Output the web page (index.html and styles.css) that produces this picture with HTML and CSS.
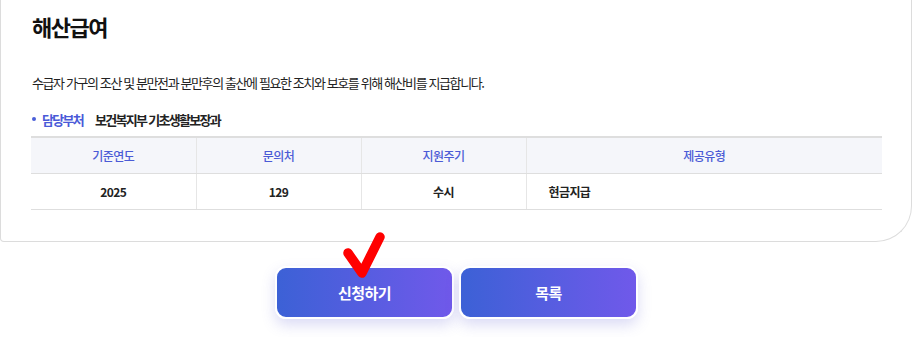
FILE: index.html
```html
<!DOCTYPE html>
<html lang="ko">
<head>
<meta charset="utf-8">
<link rel="stylesheet" href="styles.css">
</head>
<body>
<div class="page">
  <section class="card">
    <h2 class="title">해산급여</h2>
    <p class="desc">수급자 가구의 조산 및 분만전과 분만후의 출산에 필요한 조치와 보호를 위해 해산비를 지급합니다.</p>
    <div class="dept">
      <span class="dot"></span>
      <span class="dept-label">담당부처</span>
      <span class="dept-value">보건복지부 기초생활보장과</span>
    </div>
    <table class="info">
      <colgroup>
        <col class="c1"><col class="c2"><col class="c3"><col class="c4">
      </colgroup>
      <thead>
        <tr><th>기준연도</th><th>문의처</th><th>지원주기</th><th>제공유형</th></tr>
      </thead>
      <tbody>
        <tr><td>2025</td><td>129</td><td>수시</td><td class="left">현금지급</td></tr>
      </tbody>
    </table>
  </section>
  <div class="actions">
    <button class="btn">신청하기</button>
    <button class="btn">목록</button>
  </div>
  <svg class="check" width="50" height="50" viewBox="0 0 50 50">
    <path d="M7 22 L21 42 L39 6" fill="none" stroke="#ff0000" stroke-width="9.5" stroke-linecap="round" stroke-linejoin="round"/>
  </svg>
</div>
</body>
</html>
```
FILE: styles.css
```css
* { box-sizing: border-box; }
html, body { margin: 0; padding: 0; background: #fff; }
body {
  font-family: "Noto Sans CJK KR", "Noto Sans", sans-serif;
  color: #222;
  width: 913px;
  height: 337px;
  overflow: hidden;
}
.page { position: relative; }
.card {
  width: 912px;
  border: 1px solid #dcdcdc;
  border-top: none;
  border-radius: 0 0 36px 4px;
  padding: 10px 30px 31px 30px;
}
.title {
  margin: 0 0 0 1px;
  font-size: 22px;
  font-weight: 700;
  line-height: 32px;
  letter-spacing: -1.5px;
  color: #111;
}
.desc {
  margin: 31px 0 0 1px;
  font-size: 13px;
  line-height: 20px;
  letter-spacing: -1.4px;
  color: #222;
}
.dept {
  display: flex;
  align-items: center;
  margin-top: 16px;
  height: 20px;
  font-size: 13px;
  letter-spacing: -1.7px;
}
.dot {
  width: 4px; height: 4px; border-radius: 50%;
  background: #4a5fd8;
  margin: 0 6px 0 1px;
}
.dept-label { color: #4a5ad8; font-weight: 600; margin-right: 12px; }
.dept-value { color: #222; font-weight: 600; }
.info {
  margin-top: 7px;
  width: 851px;
  border-collapse: collapse;
  font-size: 12px;
  letter-spacing: -0.6px;
}
.c1 { width: 165px; } .c2 { width: 165px; } .c3 { width: 165px; }
.info th, .info td {
  height: 36px;
  padding: 0;
  text-align: center;
  border-top: 1px solid #dedede;
  border-bottom: 1px solid #dedede;
  border-left: 1px solid #e6e6e6;
}
.info th:first-child, .info td:first-child { border-left: none; }
.info th {
  background: #f5f6fa;
  color: #4b5bd6;
  font-weight: 500;
  border-top: 2px solid #dedede;
}
.info td { font-weight: 600; color: #222; }
.info td.left { text-align: left; padding-left: 22px; }
.actions {
  display: flex;
  justify-content: center;
  gap: 5px;
  margin-top: 24px;
}
.btn {
  width: 179px;
  height: 53px;
  border: 2px solid #fff;
  border-radius: 11px;
  background: linear-gradient(90deg, #3c61d6 0%, #7059ea 100%);
  color: #fff;
  font-family: inherit;
  font-size: 15px;
  font-weight: 700;
  letter-spacing: -0.6px;
  box-shadow: 0 6px 14px rgba(90, 90, 210, 0.22);
}
.check {
  position: absolute;
  left: 341px;
  top: 231px;
}
```
